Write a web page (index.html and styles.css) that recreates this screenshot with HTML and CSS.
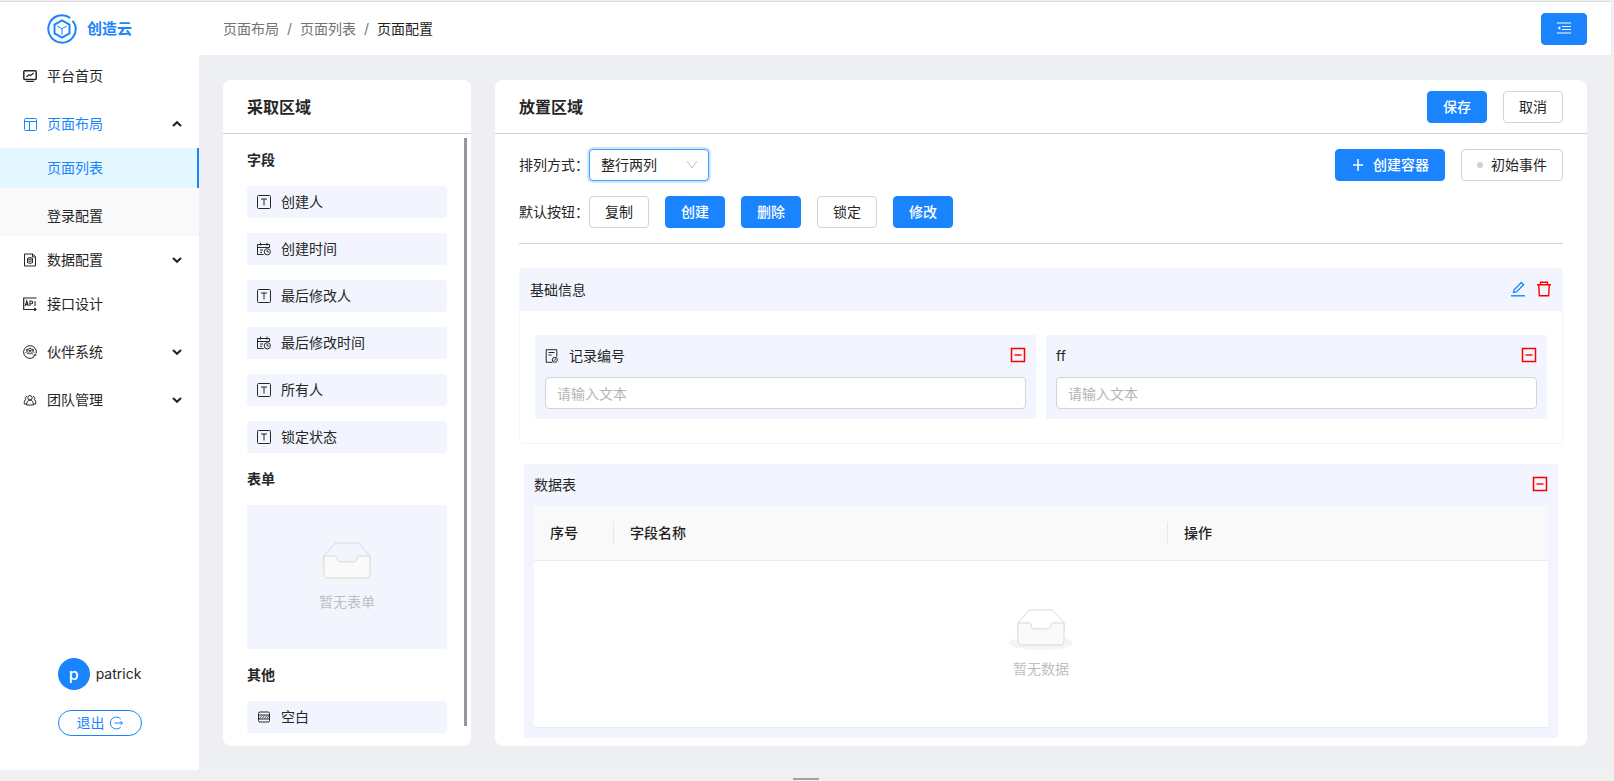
FILE: index.html
```html
<!DOCTYPE html>
<html lang="zh-CN">
<head>
<meta charset="utf-8">
<title>创造云 - 页面配置</title>
<link rel="stylesheet" href="styles.css">
</head>
<body>
<svg class="sprite" aria-hidden="true">
  <symbol id="i-text" viewBox="0 0 14 14"><rect x=".5" y=".5" width="13" height="13" rx="1"/><path d="M4 4h6M7 4v6.500"/></symbol>
  <symbol id="i-time" viewBox="0 0 14 14"><path d="M.5 12.500V2.500h12v3M.5 12.500h6M.5 5.500h12M3.500 .6v3M10 .6v3M3 8h3M3 10.300h2"/><circle cx="10.300" cy="9.800" r="3.100"/><path d="M10.200 8v2h1.600"/></symbol>
  <symbol id="i-blank" viewBox="0 0 14 14"><rect x="1.500" y="2" width="11" height="10" rx="1.500"/><path d="M1 5h12M1 9h12"/><path d="M2.500 8.500l2.500-3M5 8.500l2.500-3M7.500 8.500l2.500-3M10 8.500l2-3" stroke-width=".8"/></symbol>
  <symbol id="i-minus" viewBox="0 0 16 16"><rect x="1.500" y="1.500" width="13" height="13" stroke-width="1.500"/><path d="M4.500 8h7" stroke-width="1.400"/></symbol>
  <symbol id="i-down" viewBox="0 0 12 12"><path d="M2 4l4 3.700L10 4" stroke-width="2.200"/></symbol>
  <symbol id="i-up" viewBox="0 0 12 12"><path d="M2 8l4-3.700L10 8" stroke-width="2.200"/></symbol>
  <symbol id="i-empty" viewBox="0 0 64 41"><g transform="translate(0 1)"><ellipse cx="32" cy="33" rx="32" ry="7" fill="#f5f5f5" stroke="none"/><path d="M55 12.760L44.854 1.258C44.367.474 43.656 0 42.907 0H21.093c-.749 0-1.460.474-1.947 1.257L9 12.761V22h46v-9.240z"/><path d="M41.613 15.931c0-1.605.994-2.930 2.227-2.931H55v18.137C55 33.260 53.680 35 52.050 35h-40.100C10.320 35 9 33.259 9 31.137V13h11.160c1.233 0 2.227 1.323 2.227 2.928v.022c0 1.605 1.005 2.901 2.237 2.901h14.752c1.232 0 2.237-1.308 2.237-2.913v-.007z" fill="#fafafa"/></g></symbol>
</svg>

<div class="app">
  <aside class="sidebar">
    <div class="brand">
      <svg class="brand-logo" viewBox="0 0 30 30" aria-hidden="true"><path d="M23.300 4A13.700 13.700 0 1 0 28.300 11.500" stroke-width="2"/><path d="M25.500 6.800a13.700 13.700 0 0 1 2.900 5.200" stroke-width="2"/><path d="M15 6.300l7.500 4.300v8.800L15 23.700l-7.500-4.300v-8.800z" stroke-width="2"/><path d="M10 12l5 2.700 5-2.700M15 14.700V21"/></svg>
      <span>创造云</span>
    </div>
    <nav>
      <ul class="menu">
        <li><a class="item" href="#"><svg class="icon" viewBox="0 0 14 14"><rect x=".8" y="1.800" width="12.400" height="8.700" rx="1" stroke-width="1.500"/><path d="M3.500 8l2.300-2.200 1.800.700 3-2.500M3 12.500h8" stroke-width="1.200"/></svg><span>平台首页</span></a></li>
        <li>
          <button class="item group open" type="button"><svg class="icon" viewBox="0 0 14 14"><rect x="1.500" y="1.500" width="12" height="12" rx="1"/><path d="M1.500 4.500h12M6.500 4.500v9"/></svg><span>页面布局</span><svg class="arrow"><use href="#i-up"/></svg></button>
          <ul class="submenu">
            <li><a class="item sub active" href="#">页面列表</a></li>
            <li><a class="item sub" href="#">登录配置</a></li>
          </ul>
        </li>
        <li><button class="item group" type="button"><svg class="icon" viewBox="0 0 14 14"><path d="M1.500 1h8L12.500 3.500V13h-11zM9.500 1v3h3"/><ellipse cx="7" cy="5.500" rx="2.500" ry=".8"/><path d="M4.500 7.500c1 1 4 1 5 0M4.500 9.500c1 1 4 1 5 0M4.500 5.500v4.500M9.500 5.500v4.500"/></svg><span>数据配置</span><svg class="arrow"><use href="#i-down"/></svg></button></li>
        <li><a class="item" href="#"><svg class="icon" viewBox="0 0 14 14"><path d="M13.500 1H.7v11.500h12M11.300 11l1.800 1.500-1.800 1.300" stroke-width="1.200"/><path d="M2.300 9l1.500-5 1.500 5M2.900 7.500h1.800M7 9V4h1.300q1.300 0 1.300 1.400T8.300 6.800H7M12 4v5" stroke-width="1.100"/></svg><span>接口设计</span></a></li>
        <li><button class="item group" type="button"><svg class="icon" viewBox="0 0 14 14"><path d="M11 12A6.400 6.400 0 1 1 13.300 8M13.300 8.500l-3 3.500M10.500 10h2.800"/><circle cx="7" cy="4.500" r="1.300"/><circle cx="4.200" cy="5" r=".8"/><circle cx="9.800" cy="5" r=".8"/><path d="M4.500 8.700c0-2.700 5-2.700 5 0zM2.700 8c0-1 .8-1.500 1.800-1.500M11.300 8c0-1-.8-1.500-1.800-1.500" stroke-width=".8"/></svg><span>伙伴系统</span><svg class="arrow"><use href="#i-down"/></svg></button></li>
        <li><button class="item group" type="button"><svg class="icon" viewBox="0 0 14 14"><circle cx="7" cy="4.800" r="2.200"/><path d="M3.500 12c0-6.500 7-6.500 7 0zM4 3.500a1.700 1.700 0 0 0-1.200 3C1.500 7 1 8.500 1.300 11h2M10 3.500a1.700 1.700 0 0 1 1.200 3c1.300.500 1.800 2 1.500 4.500h-2"/></svg><span>团队管理</span><svg class="arrow"><use href="#i-down"/></svg></button></li>
      </ul>
    </nav>
    <div class="account">
      <div class="user"><span class="avatar">p</span><span>patrick</span></div>
      <button class="logout" type="button">退出<svg class="icon" viewBox="0 0 14 14"><path d="M11.800 3A6 6 0 1 0 11.800 11M5.500 7h8M11.500 5l2 2-2 2"/></svg></button>
    </div>
  </aside>

  <div class="main">
    <header class="topbar">
      <nav class="crumbs" aria-label="面包屑"><a href="#">页面布局</a><i>/</i><a href="#">页面列表</a><i>/</i><span>页面配置</span></nav>
      <button class="btn primary" type="button" aria-label="收起菜单"><svg class="icon" viewBox="0 0 14 14"><path d="M0 1h14M5 4.500h9M5 7.500h9M0 11h14" stroke-width="1.200"/><path d="M3.300 4v4L.8 6z" fill="currentColor" stroke="none"/></svg></button>
    </header>

    <main class="content">
      <section class="panel source">
        <header class="panel-head"><h2>采取区域</h2></header>
        <div class="source-body">
          <div class="source-list">
            <h3>字段</h3>
            <ul class="chips">
              <li class="chip"><svg class="icon"><use href="#i-text"/></svg>创建人</li>
              <li class="chip"><svg class="icon"><use href="#i-time"/></svg>创建时间</li>
              <li class="chip"><svg class="icon"><use href="#i-text"/></svg>最后修改人</li>
              <li class="chip"><svg class="icon"><use href="#i-time"/></svg>最后修改时间</li>
              <li class="chip"><svg class="icon"><use href="#i-text"/></svg>所有人</li>
              <li class="chip"><svg class="icon"><use href="#i-text"/></svg>锁定状态</li>
            </ul>
            <h3>表单</h3>
            <div class="empty form-empty"><svg class="empty-art"><use href="#i-empty"/></svg><span>暂无表单</span></div>
            <h3>其他</h3>
            <ul class="chips">
              <li class="chip"><svg class="icon"><use href="#i-blank"/></svg>空白</li>
            </ul>
          </div>
          <div class="scroll-thumb"></div>
        </div>
      </section>

      <section class="panel target">
        <header class="panel-head">
          <h2>放置区域</h2>
          <div class="actions"><button class="btn primary" type="button">保存</button><button class="btn" type="button">取消</button></div>
        </header>
        <div class="target-body">
          <div class="settings">
            <div class="row">
              <div class="labelled">
                <label for="layout">排列方式：</label>
                <span class="select"><select id="layout"><option>整行两列</option></select><svg viewBox="0 0 12 12" aria-hidden="true"><path d="M1 2l5 7 5-7"/></svg></span>
              </div>
              <div class="actions">
                <button class="btn primary with-icon" type="button"><svg class="icon" viewBox="0 0 14 14"><path d="M7 1v12M2 7h10" stroke-width="1.500"/></svg>创建容器</button>
                <button class="btn with-icon" type="button"><span class="dot"></span>初始事件</button>
              </div>
            </div>
            <div class="row">
              <div class="labelled">
                <span>默认按钮：</span>
                <div class="actions">
                  <button class="btn" type="button">复制</button>
                  <button class="btn primary" type="button">创建</button>
                  <button class="btn primary" type="button">删除</button>
                  <button class="btn" type="button">锁定</button>
                  <button class="btn primary" type="button">修改</button>
                </div>
              </div>
            </div>
          </div>

          <section class="box">
            <header class="box-head">
              <span>基础信息</span>
              <div class="tools">
                <button class="tool edit" type="button" aria-label="编辑"><svg viewBox="0 0 16 16"><path d="M1 14.800h14" stroke-width="1.400"/><path d="M3.500 11.500l.600-2.800L11.300 1.500l2.300 2.300-7.200 7.200z" stroke-width="1.300"/></svg></button>
                <button class="tool danger" type="button" aria-label="删除"><svg viewBox="0 0 16 16"><path d="M1 3.700h14M4.500 3.500V1.200h7v2.300M2.800 4l.500 10.800h9.400L13.200 4" stroke-width="1.400"/></svg></button>
              </div>
            </header>
            <div class="fields">
              <div class="field">
                <div class="field-head"><label for="record"><svg class="icon" viewBox="0 0 14 14"><path d="M7.500 13.300H1.200V.7h10.600v7M3.500 3.500h6M3.500 6h3"/><circle cx="9.800" cy="10.800" r="2.500"/><path d="M8.500 12l2.800-2.600"/></svg>记录编号</label><button class="tool danger" type="button" aria-label="移除"><svg><use href="#i-minus"/></svg></button></div>
                <input id="record" type="text" placeholder="请输入文本">
              </div>
              <div class="field">
                <div class="field-head"><label for="ff">ff</label><button class="tool danger" type="button" aria-label="移除"><svg><use href="#i-minus"/></svg></button></div>
                <input id="ff" type="text" placeholder="请输入文本">
              </div>
            </div>
          </section>

          <section class="data">
            <div class="field-head"><span>数据表</span><button class="tool danger" type="button" aria-label="移除"><svg><use href="#i-minus"/></svg></button></div>
            <table>
              <thead><tr><th class="col-no"><span>序号</span></th><th><span>字段名称</span></th><th class="col-action"><span>操作</span></th></tr></thead>
              <tbody><tr><td colspan="3"><div class="empty"><svg class="empty-art"><use href="#i-empty"/></svg><span>暂无数据</span></div></td></tr></tbody>
            </table>
          </section>
        </div>
      </section>
    </main>
  </div>
</div>
<footer class="dock"><span class="handle"></span></footer>
</body>
</html>
```

FILE: styles.css
```css
* { box-sizing: border-box; }

:root {
  --primary: #1a84ff;
  --text: #262626;
  --line: #d3d3d3;
  --tint: #f2f5fd;
}

body {
  margin: 0;
  min-height: 100vh;
  display: flex;
  flex-direction: column;
  padding: 1px 3px 0 0;
  background: #f0f0f1;
  color: var(--text);
  font: 14px/22px Inter, "Noto Sans CJK SC", sans-serif;
}

button, input, select { font: inherit; color: inherit; }
button { cursor: pointer; }
a { color: inherit; text-decoration: none; }
ul { list-style: none; margin: 0; padding: 0; }
h2, h3 { margin: 0; font-weight: 700; }
h2 { font-size: 16px; line-height: 22px; }
h3 { font-size: 14px; line-height: 22px; }
svg { fill: none; stroke: currentColor; flex: none; }
.sprite { display: none; }
.icon { width: 14px; height: 14px; }

.app {
  flex: 1;
  display: flex;
  border-top: 1px solid #dcdcdc;
  background: #eeeff3;
}

/* Sidebar */
.sidebar {
  width: 199px;
  flex: none;
  display: flex;
  flex-direction: column;
  background: #fff;
}
.brand {
  height: 54px;
  display: flex;
  align-items: center;
  gap: 10px;
  padding-left: 47px;
  color: var(--primary);
  font-size: 15px;
  font-weight: 700;
}
.brand-logo { width: 30px; height: 30px; }

.item {
  display: flex;
  align-items: center;
  gap: 10px;
  width: 100%;
  height: 40px;
  margin-bottom: 4px;
  padding: 0 16px 0 23px;
  border: 0;
  background: none;
  text-align: left;
}
.group { height: 48px; margin-bottom: 0; }
.open { color: var(--primary); }
.arrow { width: 12px; height: 12px; margin-left: auto; color: var(--text); }
.submenu {
  display: flex;
  flex-direction: column;
  gap: 8px;
  background: #f9f9f9;
}
.sub { margin: 0; padding-left: 47px; }
.active {
  background: #e4f7ff;
  color: var(--primary);
  border-right: 2px solid var(--primary);
}

.account {
  margin-top: auto;
  padding-bottom: 34px;
  display: flex;
  flex-direction: column;
  align-items: center;
  gap: 20px;
}
.user { display: flex; align-items: center; gap: 6px; }
.avatar {
  width: 32px;
  height: 32px;
  border-radius: 50%;
  background: var(--primary);
  color: #fff;
  font-size: 16px;
  font-weight: 500;
  line-height: 32px;
  text-align: center;
}
.logout {
  display: flex;
  align-items: center;
  gap: 4px;
  height: 26px;
  padding: 0 18px;
  border: 1px solid var(--primary);
  border-radius: 13px;
  background: #fff;
  color: var(--primary);
}

/* Main column */
.main { flex: 1; min-width: 0; display: flex; flex-direction: column; }
.topbar {
  height: 53px;
  display: flex;
  align-items: center;
  justify-content: space-between;
  padding: 0 24px;
  background: #fff;
}
.crumbs { display: flex; gap: 8px; color: #737373; }
.crumbs i { font-style: normal; }
.crumbs span { color: #1f1f1f; }

.btn {
  display: inline-flex;
  align-items: center;
  justify-content: center;
  height: 32px;
  padding: 0 15px;
  border: 1px solid var(--line);
  border-radius: 4px;
  background: #fff;
  white-space: nowrap;
}
.primary { border-color: var(--primary); background: var(--primary); color: #fff; font-weight: 500; }
.with-icon { gap: 8px; }
.dot { width: 6px; height: 6px; border-radius: 50%; background: #d0d0d0; }
.actions { display: flex; gap: 16px; }

.content { flex: 1; display: flex; gap: 24px; padding: 25px 24px 24px; }
.panel { background: #fff; border-radius: 8px; display: flex; flex-direction: column; }
.panel-head {
  display: flex;
  align-items: center;
  justify-content: space-between;
  height: 54px;
  padding: 0 24px;
  border-bottom: 1px solid var(--line);
}

.source { width: 248px; flex: none; }
.source-body { flex: 1; display: flex; justify-content: space-between; padding: 4px 4px 12px 24px; }
.source-list { width: 200px; display: flex; flex-direction: column; gap: 15px; padding-top: 11px; }
.scroll-thumb { width: 3px; margin-bottom: 8px; background: #969696; }
.chips { display: flex; flex-direction: column; gap: 15px; }
.chip {
  display: flex;
  align-items: center;
  gap: 10px;
  height: 32px;
  padding: 0 10px;
  border-radius: 4px;
  background: var(--tint);
}

.empty {
  display: flex;
  flex-direction: column;
  align-items: center;
  justify-content: center;
  gap: 8px;
  color: #bfbfbf;
}
.empty-art { width: 64px; height: 41px; color: #d9d9d9; }
.form-empty { height: 144px; border-radius: 4px; background: var(--tint); }

.target { flex: 1; min-width: 0; }
.target-body { flex: 1; display: flex; flex-direction: column; padding: 15px 24px 8px; }
.settings {
  display: flex;
  flex-direction: column;
  gap: 15px;
  padding-bottom: 15px;
  border-bottom: 1px solid var(--line);
}
.row { display: flex; justify-content: space-between; }
.labelled { display: flex; align-items: center; }
.select { position: relative; width: 120px; }
.select select {
  display: block;
  width: 100%;
  height: 32px;
  padding: 0 11px;
  border: 1px solid #409eff;
  border-radius: 4px;
  outline: 0;
  background: #fff;
  box-shadow: 0 0 0 2px #d1e6ff;
  appearance: none;
}
.select svg { position: absolute; top: 10px; right: 11px; width: 12px; height: 12px; color: #bfbfbf; pointer-events: none; }

.box { margin-top: 24px; border: 1px solid var(--tint); border-radius: 4px; }
.box-head {
  display: flex;
  align-items: center;
  justify-content: space-between;
  height: 42px;
  padding: 0 10px;
  background: var(--tint);
}
.tools { display: flex; gap: 10px; }
.tool { padding: 0 0 2px; border: 0; background: none; }
.tool svg { display: block; width: 16px; height: 16px; }
.edit { color: var(--primary); }
.danger { color: #ff0000; }

.fields { display: grid; grid-template-columns: 1fr 1fr; gap: 10px; padding: 24px 15px; }
.field { padding: 10px; background: var(--tint); }
.field-head { display: flex; align-items: center; justify-content: space-between; height: 22px; margin-bottom: 10px; }
.field-head label { display: flex; align-items: center; gap: 10px; }
.field input {
  display: block;
  width: 100%;
  height: 32px;
  padding: 0 11px;
  border: 1px solid var(--line);
  border-radius: 4px;
  background: #fff;
}
.field input::placeholder { color: #b5b5b5; }

.data { flex: 1; display: flex; flex-direction: column; margin: 20px 5px 0; padding: 10px; background: var(--tint); }
table { flex: 1; width: 100%; background: #fff; border-collapse: separate; border-spacing: 0; table-layout: fixed; }
th {
  height: 55px;
  padding: 0;
  border-bottom: 1px solid #ececec;
  background: #f9f9f9;
  color: #1f1f1f;
  font-weight: 500;
  text-align: left;
}
th span { display: block; padding-left: 16px; }
th:not(:last-child) span { border-right: 1px solid #e8e8e8; }
.col-no { width: 80px; }
.col-action { width: 380px; }
td { height: 166px; padding: 0; border-bottom: 1px solid #ececec; }

.dock { height: 11px; flex: none; display: flex; justify-content: center; align-items: flex-end; }
.handle { width: 26px; height: 2px; margin-bottom: 1px; background: #a3a3a3; }
```
